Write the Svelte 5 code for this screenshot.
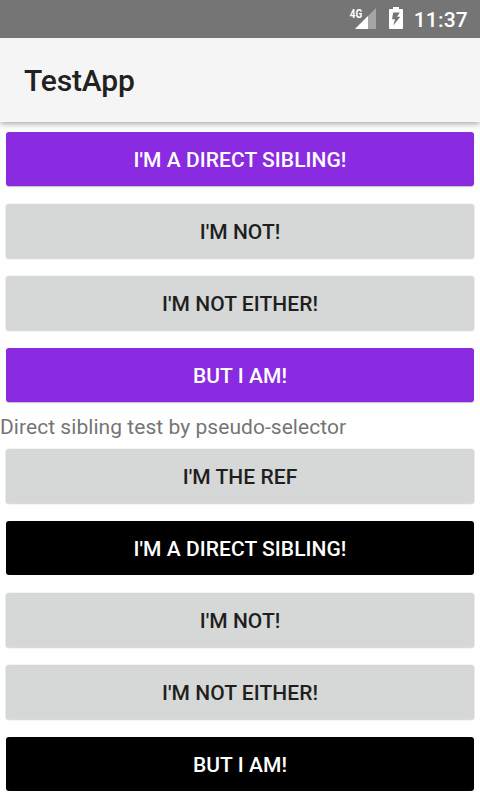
<script>
  const first = [
    { text: "I'm a direct sibling!", kind: 'violet' },
    { text: "I'm not!", kind: 'plain' },
    { text: "I'm not either!", kind: 'plain' },
    { text: 'But I am!', kind: 'violet' }
  ];
  const second = [
    { text: "I'm the ref", kind: 'plain' },
    { text: "I'm a direct sibling!", kind: 'black' },
    { text: "I'm not!", kind: 'plain' },
    { text: "I'm not either!", kind: 'plain' },
    { text: 'But I am!', kind: 'black' }
  ];
</script>

{#snippet buttons(items)}
  {#each items as item}
    <div class="row">
      <button class={item.kind}>{item.text}</button>
    </div>
  {/each}
{/snippet}

<div class="screen">
  <div class="status">
    <svg class="signal" width="28" height="24" viewBox="0 0 28 24">
      <path d="M27 3V24H6Z" fill="#fff" fill-opacity=".35" />
      <path d="M19 11V24H6Z" fill="#fff" />
      <text x="0.8" y="13" textLength="12.4" lengthAdjust="spacingAndGlyphs">4G</text>
    </svg>
    <svg class="battery" width="14" height="22" viewBox="0 0 14 22">
      <path
        fill="#fff"
        fill-rule="evenodd"
        d="M4 0H10V2H13Q14 2 14 3V21Q14 22 13 22H1Q0 22 0 21V3Q0 2 1 2H4ZM4.2 5.5L3 12.3H6L4.3 18.5L11.3 9.8H8L10.8 5.5Z"
      />
    </svg>
    <span class="clock">11:37</span>
  </div>
  <header><h1>TestApp</h1></header>
  <main>
    {@render buttons(first)}
    <p>Direct sibling test by pseudo-selector</p>
    {@render buttons(second)}
  </main>
</div>

<style>
  .screen {
    width: 480px;
    height: 800px;
    display: flex;
    flex-direction: column;
    overflow: hidden;
    background: #fff;
    font-family: Roboto, sans-serif;
  }
  .status {
    height: 38px;
    flex: none;
    box-sizing: border-box;
    display: flex;
    justify-content: flex-end;
    align-items: flex-start;
    padding-right: 12px;
    background: #757575;
    color: #fff;
    z-index: 1;
    position: relative;
  }
  .signal {
    margin: 5px 12px 0 0;
  }
  .signal text {
    font: 700 13px Roboto, sans-serif;
    fill: #fff;
  }
  .battery {
    margin: 7px 11px 0 0;
  }
  .clock {
    font-size: 21px;
    font-weight: 500;
    line-height: 25px;
    margin-top: 8px;
    letter-spacing: 0.2px;
  }
  header {
    height: 84px;
    flex: none;
    box-sizing: border-box;
    display: flex;
    align-items: center;
    padding: 2px 0 0 24px;
    background: #f5f5f5;
    box-shadow: 0 2px 6px rgba(0, 0, 0, 0.34);
  }
  h1 {
    margin: 0;
    font-size: 30px;
    font-weight: 500;
    line-height: 36px;
    letter-spacing: -0.15px;
    color: #212121;
  }
  main {
    padding-top: 1px;
  }
  .row {
    height: 72px;
    box-sizing: border-box;
    padding: 9px 6px;
    display: flex;
  }
  button {
    flex: 1;
    border: 0;
    border-radius: 3px;
    padding: 2px 0 0;
    font: 500 21px/25px Roboto, sans-serif;
    letter-spacing: 0.05px;
    text-transform: uppercase;
    color: #fff;
  }
  .plain {
    background: #d6d8d7;
    color: #1f1f1f;
    box-shadow: 0 1px 0 #d9dbda, 0 0.5px 0 1px #eaebeb;
  }
  .violet {
    background: #8a2be2;
    box-shadow: 0 1px 1px rgba(0, 0, 0, 0.25);
  }
  .black {
    background: #000;
  }
  p {
    margin: 0;
    height: 29px;
    font-size: 21px;
    line-height: 32px;
    letter-spacing: 0.05px;
    color: #757575;
  }
</style>
